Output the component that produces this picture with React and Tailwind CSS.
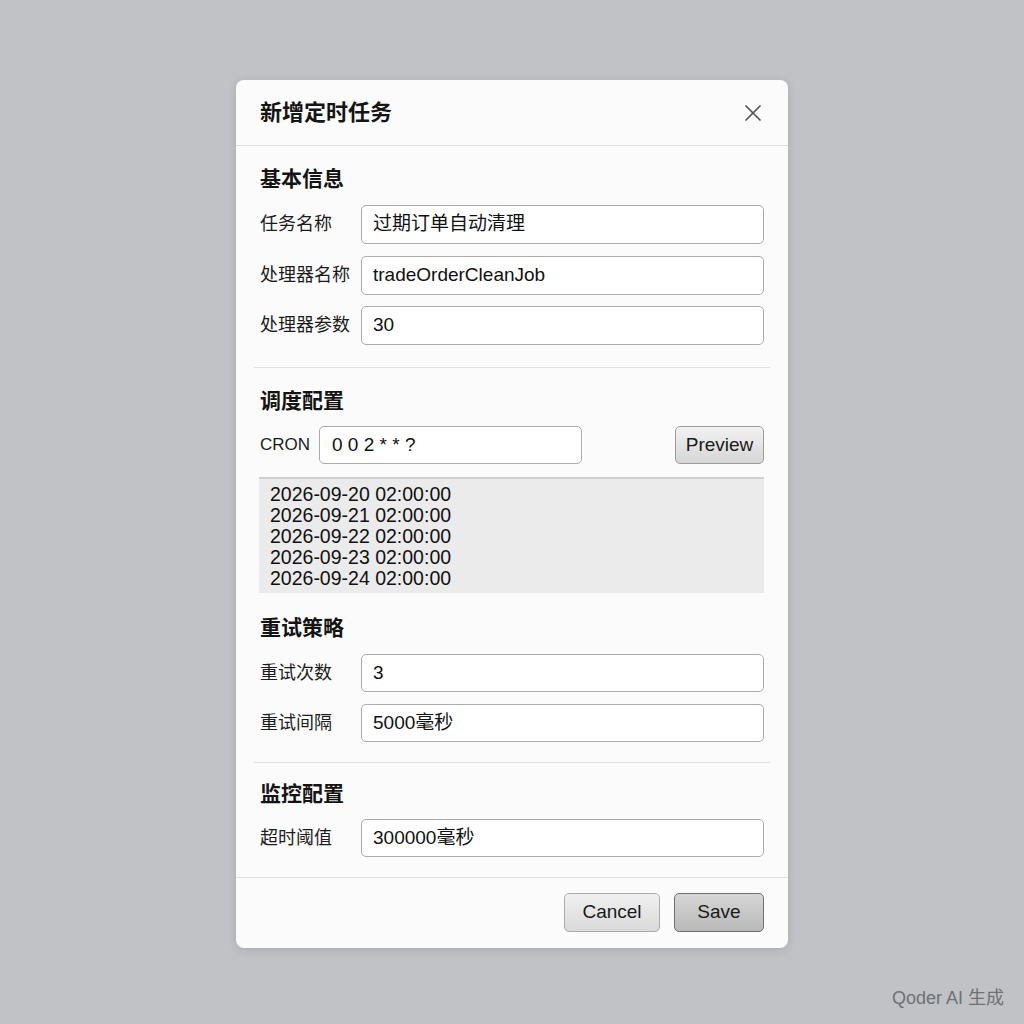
import { X } from "lucide-react";

const font = { fontFamily: '"Liberation Sans", Arial, "Noto Sans CJK SC", sans-serif' };

function Field({ label, value, h = "h-[39px]" }) {
  return (
    <div className={"flex items-center " + h}>
      <label className="w-[101px] shrink-0 text-[18px] text-[#1c1c1c]">{label}</label>
      <div className="flex-1 h-full flex items-center px-[11px] bg-white border border-[#ababab] rounded-[5px] text-[19px] text-[#111]">
        {value}
      </div>
    </div>
  );
}

function Heading({ children, className = "" }) {
  return <h3 className={"text-[21px] font-bold leading-[28px] text-[#141414] " + className}>{children}</h3>;
}

const dates = [
  "2026-09-20 02:00:00",
  "2026-09-21 02:00:00",
  "2026-09-22 02:00:00",
  "2026-09-23 02:00:00",
  "2026-09-24 02:00:00",
];

export default function App() {
  return (
    <div className="relative w-full h-screen bg-[#c0c2c5] overflow-hidden" style={font}>
      <div className="absolute left-[236px] top-[80px] w-[552px] bg-[#fbfbfb] rounded-[8px] shadow-[0_2px_10px_rgba(0,0,0,0.12)]">
        {/* header */}
        <div className="h-[66px] flex items-center justify-between pl-[24px] pr-[21px] border-b border-[#dedede]">
          <h2 className="text-[22px] font-semibold text-[#151515]">新增定时任务</h2>
          <X size={28} strokeWidth={1.5} className="text-[#555]" />
        </div>

        <div className="px-[24px] pt-[19px]">
          <Heading>基本信息</Heading>
          <div className="mt-[12px] flex flex-col gap-[11.5px]">
            <Field label="任务名称" value="过期订单自动清理" />
            <Field label="处理器名称" value="tradeOrderCleanJob" />
            <Field label="处理器参数" value="30" />
          </div>

          <div className="-mx-[6px] mt-[22px] border-t border-[#e2e2e2]" />

          <Heading className="mt-[19px]">调度配置</Heading>
          <div className="mt-[11px] flex items-center h-[38px]">
            <span className="w-[59px] shrink-0 text-[17px] text-[#1c1c1c]">CRON</span>
            <div className="w-[263px] h-full flex items-center px-[12px] bg-white border border-[#ababab] rounded-[5px] text-[19px] text-[#111]">
              0 0 2 * * ?
            </div>
            <div className="flex-1" />
            <button className="w-[89px] h-full rounded-[5px] border border-[#9c9c9c] bg-gradient-to-b from-[#f2f2f2] to-[#d6d6d6] text-[19px] text-[#1a1a1a]">
              Preview
            </button>
          </div>
          <div className="mt-[13px] -ml-[1px] h-[116px] bg-[#ebebeb] border-t-2 border-[#d0d0d0] pl-[11px] pt-[5px] text-[19.5px] leading-[21px] text-[#111]">
            {dates.map((d) => (
              <div key={d}>{d}</div>
            ))}
          </div>

          <Heading className="mt-[21px]">重试策略</Heading>
          <div className="mt-[12px] flex flex-col gap-[12px]">
            <Field label="重试次数" value="3" h="h-[38px]" />
            <Field label="重试间隔" value="5000毫秒" h="h-[38px]" />
          </div>

          <div className="-mx-[6px] mt-[20px] border-t border-[#e2e2e2]" />

          <Heading className="mt-[17px]">监控配置</Heading>
          <div className="mt-[11px]">
            <Field label="超时阈值" value="300000毫秒" h="h-[38px]" />
          </div>
        </div>

        {/* footer */}
        <div className="mt-[20px] border-t border-[#e0e0e0] flex justify-end gap-[14px] px-[24px] pt-[15px] pb-[16px]">
          <button className="w-[96px] h-[39px] rounded-[5px] border border-[#ababab] bg-gradient-to-b from-[#f0f0f0] to-[#dadada] text-[19px] text-[#1a1a1a]">
            Cancel
          </button>
          <button className="w-[90px] h-[39px] rounded-[5px] border border-[#6f6f6f] bg-gradient-to-b from-[#d6d6d6] to-[#b9b9b9] text-[19px] text-[#1a1a1a]">
            Save
          </button>
        </div>
      </div>

      <div className="absolute right-[20px] top-[985px] text-[18px] text-[#6f7174]">Qoder AI 生成</div>
    </div>
  );
}
